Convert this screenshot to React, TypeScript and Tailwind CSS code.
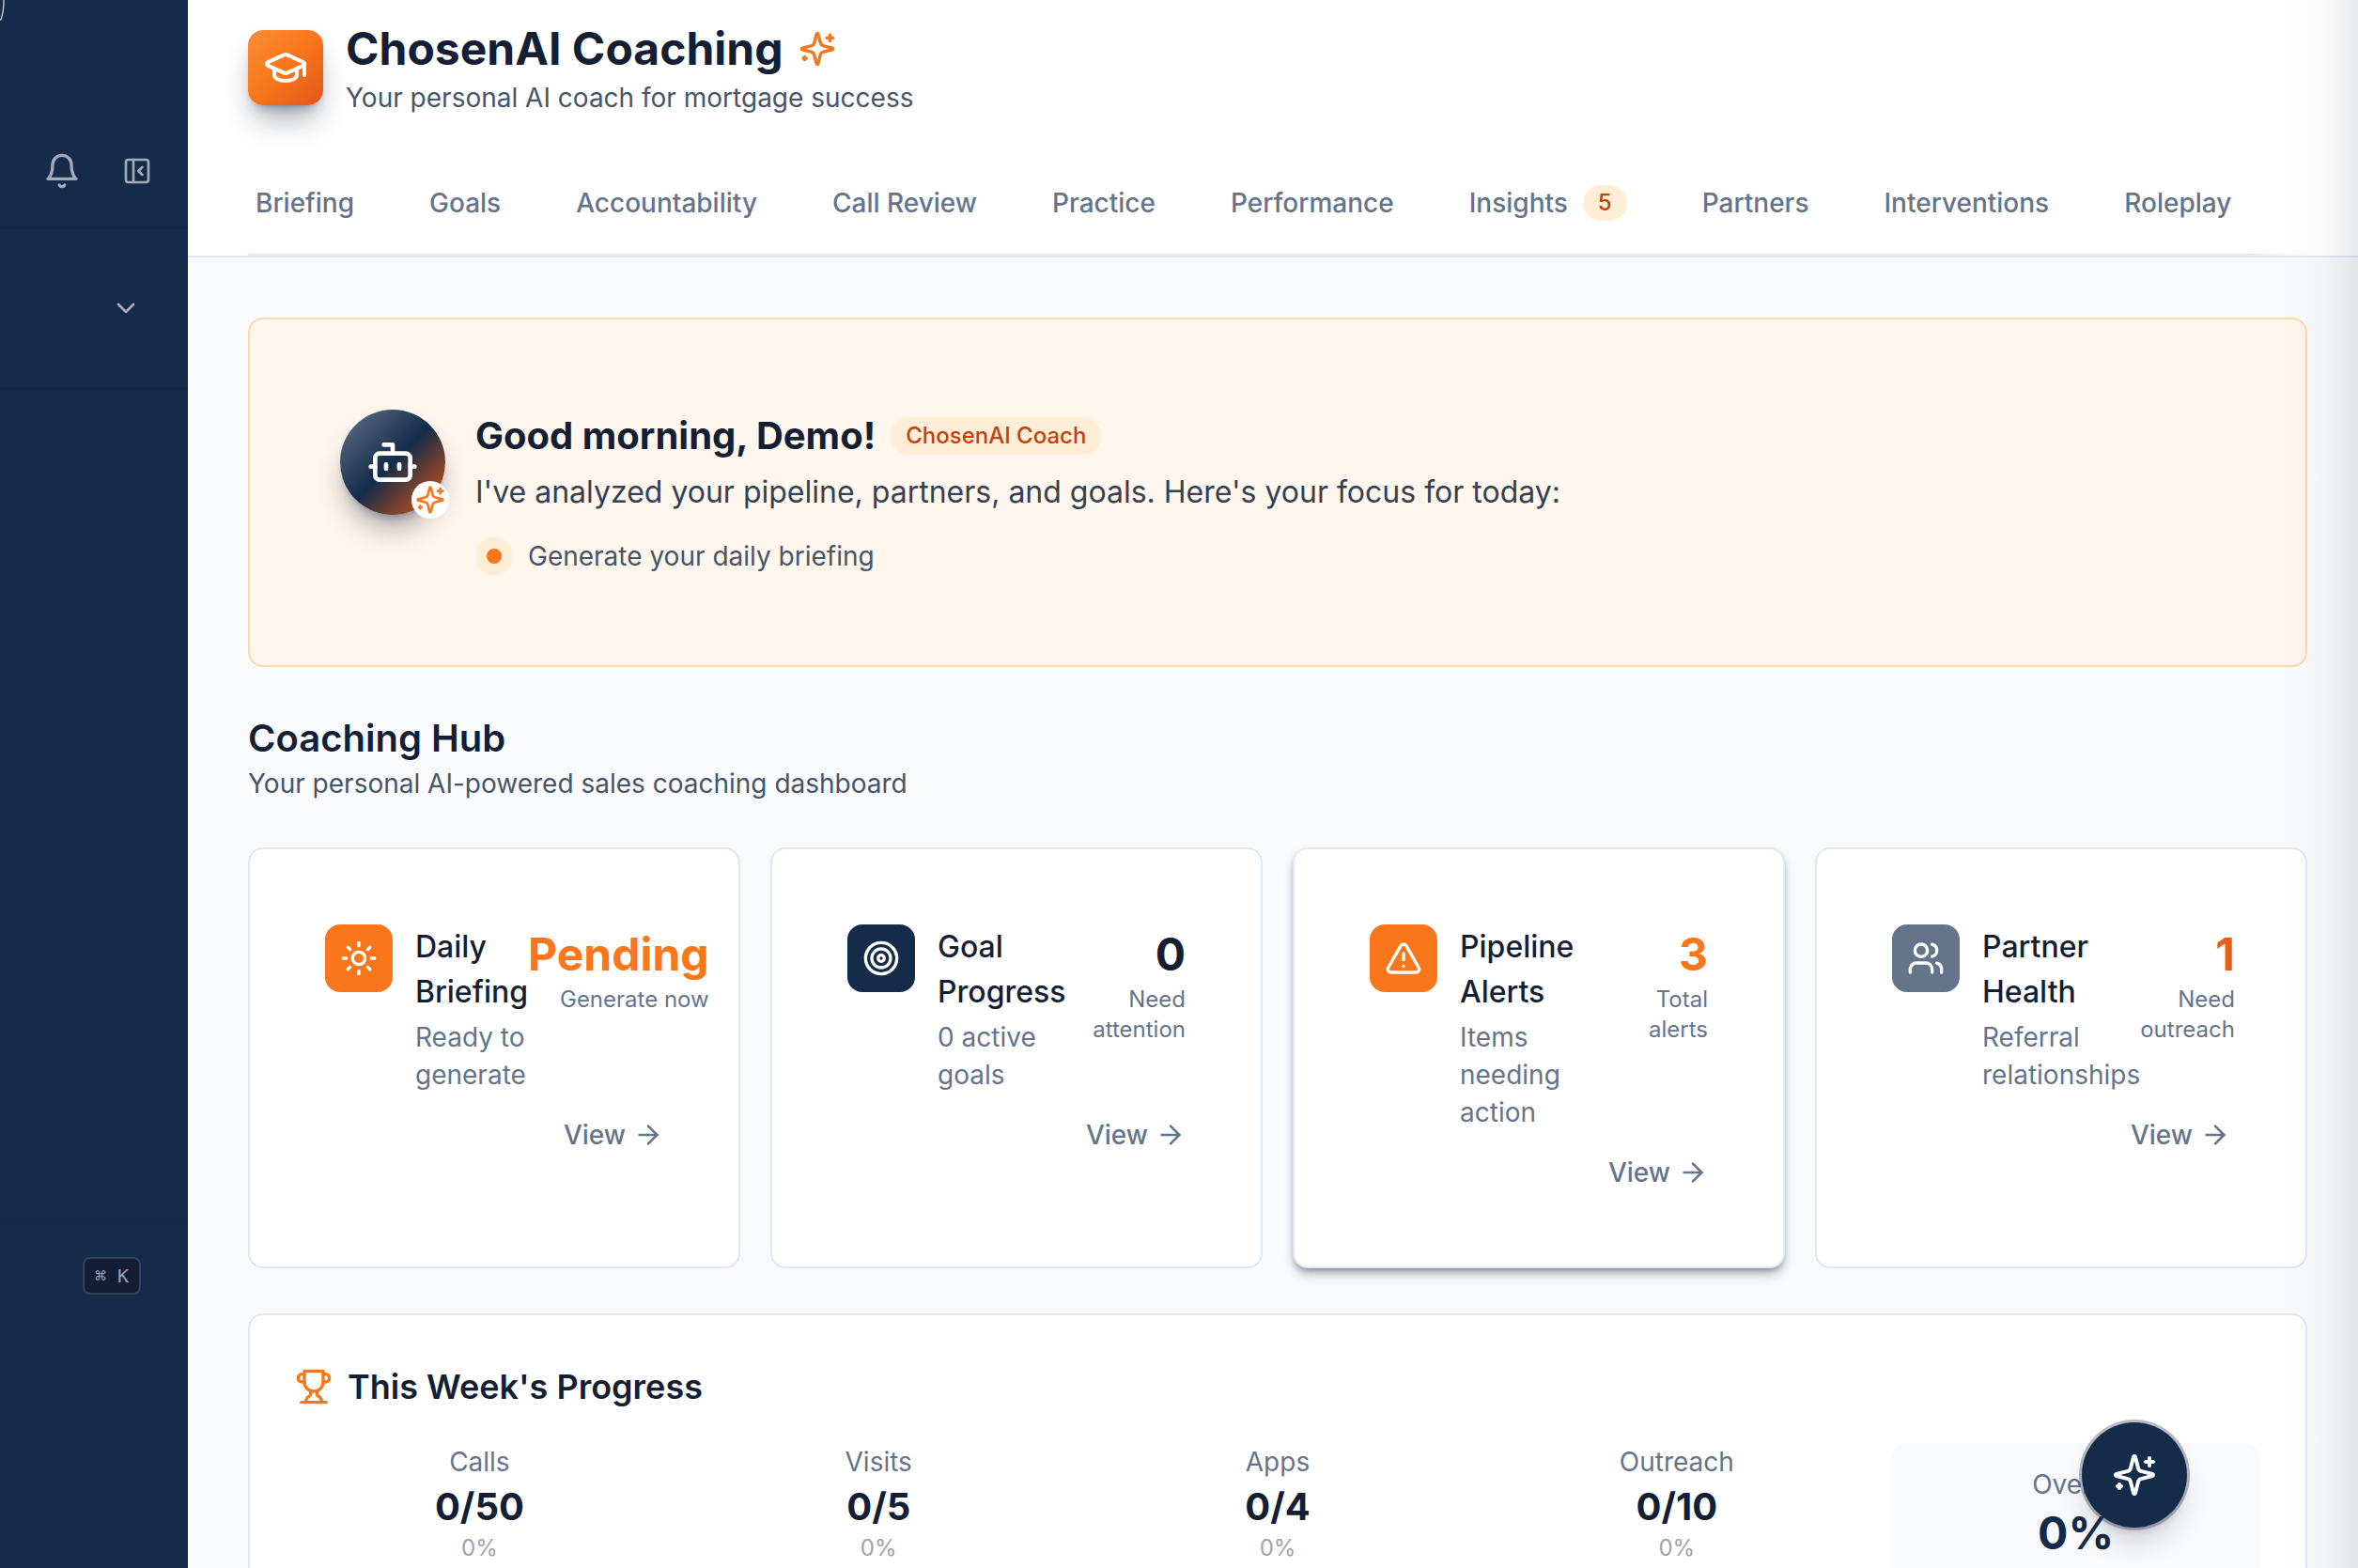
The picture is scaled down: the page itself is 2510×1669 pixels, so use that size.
import type { ReactNode } from 'react';
import {
  ArrowRight,
  Bot,
  ChevronDown,
  GraduationCap,
  PanelLeftClose,
  Sun,
  Target,
  TriangleAlert,
  Users,
} from 'lucide-react';

const TABS = [
  { label: 'Briefing' },
  { label: 'Goals' },
  { label: 'Accountability' },
  { label: 'Call Review' },
  { label: 'Practice' },
  { label: 'Performance' },
  { label: 'Insights', count: 5 },
  { label: 'Partners' },
  { label: 'Interventions' },
  { label: 'Roleplay' },
];

const HUB_CARDS = [
  {
    title: 'Daily Briefing',
    text: 'Ready to generate',
    value: 'Pending',
    note: 'Generate now',
    icon: <Sun size={40} />,
    tile: 'bg-[#f9761a]',
    tone: 'text-[#f9761a]',
  },
  {
    title: 'Goal Progress',
    text: '0 active goals',
    value: '0',
    note: 'Need attention',
    icon: <Target size={40} />,
    tile: 'bg-[#142c49]',
    tone: 'text-[#141f35]',
  },
  {
    title: 'Pipeline Alerts',
    text: 'Items needing action',
    value: '3',
    note: 'Total alerts',
    icon: <TriangleAlert size={40} />,
    tile: 'bg-[#f9761a]',
    tone: 'text-[#f9761a]',
    raised: true,
  },
  {
    title: 'Partner Health',
    text: 'Referral relationships',
    value: '1',
    note: 'Need outreach',
    icon: <Users size={40} />,
    tile: 'bg-[#64748b]',
    tone: 'text-[#e85d1f]',
  },
];

const STATS = [
  { label: 'Calls', value: '0/50', pct: '0%' },
  { label: 'Visits', value: '0/5', pct: '0%' },
  { label: 'Apps', value: '0/4', pct: '0%' },
  { label: 'Outreach', value: '0/10', pct: '0%' },
];

type GlyphProps = { size: number; className?: string; weight?: number; children: ReactNode };

function Glyph({ size, className, weight = 2, children }: GlyphProps) {
  return (
    <svg
      width={size}
      height={size}
      viewBox="0 0 24 24"
      fill="none"
      stroke="currentColor"
      strokeWidth={weight}
      strokeLinecap="round"
      strokeLinejoin="round"
      className={className}
      aria-hidden="true"
    >
      {children}
    </svg>
  );
}

function SparklesIcon({ size, className }: { size: number; className?: string }) {
  return (
    <Glyph size={size} className={className}>
      <path d="M9.937 15.5A2 2 0 0 0 8.5 14.063l-6.135-1.582a.5.5 0 0 1 0-.962L8.5 9.936A2 2 0 0 0 9.937 8.5l1.582-6.135a.5.5 0 0 1 .963 0L14.063 8.5A2 2 0 0 0 15.5 9.937l6.135 1.581a.5.5 0 0 1 0 .964L15.5 14.063a2 2 0 0 0-1.437 1.437l-1.582 6.135a.5.5 0 0 1-.963 0z" />
      <path d="M20 3v4" />
      <path d="M22 5h-4" />
      <path d="M4 17v2" />
      <path d="M5 18H3" />
    </Glyph>
  );
}

function BellIcon({ size }: { size: number }) {
  return (
    <Glyph size={size}>
      <path d="M6 8a6 6 0 0 1 12 0c0 7 3 9 3 9H3s3-2 3-9" />
      <path d="M10.3 21a1.94 1.94 0 0 0 3.4 0" />
    </Glyph>
  );
}

function TrophyIcon({ size, className }: { size: number; className?: string }) {
  return (
    <Glyph size={size} className={className}>
      <path d="M6 9H4.5a2.5 2.5 0 0 1 0-5H6" />
      <path d="M18 9h1.5a2.5 2.5 0 0 0 0-5H18" />
      <path d="M4 22h16" />
      <path d="M10 14.66V17c0 .55-.47.98-.97 1.21C7.85 18.75 7 20.24 7 22" />
      <path d="M14 14.66V17c0 .55.47.98.97 1.21C16.15 18.75 17 20.24 17 22" />
      <path d="M18 2H6v7a6 6 0 0 0 12 0V2Z" />
    </Glyph>
  );
}

function Sidebar() {
  return (
    <aside className="relative flex w-[200px] shrink-0 flex-col overflow-hidden bg-[#142c49] text-[#a3abb8]">
      {/* Edge of the logo mark */}
      <svg className="absolute left-0 top-0" width="8" height="24" viewBox="0 0 8 24" fill="none">
        <path d="M4 0C4 8 3 15 1 21H0" stroke="#b9c0ca" strokeWidth="1.5" />
      </svg>
      <div className="flex h-[244px] items-end justify-end gap-11 border-b-2 border-[#12284a] pb-10 pr-[38px]">
        <button aria-label="Notifications" className="grid h-10 w-10 place-items-center">
          <BellIcon size={40} />
        </button>
        <button aria-label="Collapse sidebar" className="grid h-10 w-8 place-items-center">
          <PanelLeftClose size={32} />
        </button>
      </div>
      <div className="flex h-[170px] items-center justify-end border-b-2 border-[#12284a] pr-[50px]">
        <button aria-label="Switch workspace">
          <ChevronDown size={32} />
        </button>
      </div>
      <nav className="flex-1" />
      <div className="flex h-[373px] items-start justify-end border-t-2 border-[#12284a] pr-[50px] pt-10">
        <kbd className="flex h-10 items-center rounded-lg border-2 border-[#334155] bg-[#141d33] px-[11px] font-['DejaVu_Sans_Mono',monospace] text-[20px] leading-8 text-[#94a3b8]">
          ⌘ K
        </kbd>
      </div>
    </aside>
  );
}

function Header() {
  return (
    <header className="border-b-2 border-[#e2e8f0] bg-white pl-16 pr-[54px] pt-5">
      <div className="flex items-center gap-6">
        <div className="grid h-20 w-20 shrink-0 place-items-center rounded-2xl bg-linear-to-br/srgb from-[#fb8c38] via-[#f9761a] to-[#e2551c] text-white shadow-[0_20px_30px_-6px_rgba(15,23,42,0.35),0_8px_12px_-8px_rgba(20,44,73,0.5)]">
          <GraduationCap size={48} />
        </div>
        <div>
          <h1 className="flex items-center gap-4 text-[48px] font-bold leading-[64px] text-[#141f35]">
            ChosenAI Coaching
            <SparklesIcon size={40} className="text-[#f9761a]" />
          </h1>
          <p className="text-[28px] leading-10 text-[#475569]">Your personal AI coach for mortgage success</p>
        </div>
      </div>
      <nav className="mt-[60px] flex h-[86px] items-start gap-20 whitespace-nowrap pl-2 pt-3">
        {TABS.map((t) => (
          <button key={t.label} className="flex h-10 items-center gap-4 text-[28px] font-medium leading-10 text-[#64748b]">
            {t.label}
            {t.count && (
              <span className="rounded-full bg-[#ffedd5] px-4 text-[24px] leading-[38px] text-[#c2410c]">{t.count}</span>
            )}
          </button>
        ))}
      </nav>
      <div className="h-0.5 bg-gradient-to-r from-[#e2e8f0] from-97% to-white" />
    </header>
  );
}

function Greeting() {
  return (
    <section className="flex gap-8 rounded-2xl border-2 border-[#fed7aa] bg-[#fff6ed] p-24">
      <div className="relative h-28 w-28 shrink-0">
        <div className="grid h-28 w-28 place-items-center rounded-full bg-linear-to-br/srgb from-[#64748b] via-[#142c49] to-[#ea580c] text-white shadow-[0_20px_30px_-6px_rgba(15,23,42,0.35),0_8px_12px_-8px_rgba(20,44,73,0.5)]">
          <Bot size={56} />
        </div>
        <div className="absolute -bottom-1 -right-1 grid h-10 w-10 place-items-center rounded-full bg-white text-[#f9761a]">
          <SparklesIcon size={32} />
        </div>
      </div>
      <div>
        <div className="flex items-center gap-4">
          <h2 className="text-[40px] font-bold leading-[56px] text-[#141f35]">Good morning, Demo!</h2>
          <span className="rounded-full bg-[#ffedd5] px-4 text-[24px] font-medium leading-10 text-[#c2410c]">
            ChosenAI Coach
          </span>
        </div>
        <p className="mt-2 text-[32px] leading-[48px] text-[#334155]">
          I've analyzed your pipeline, partners, and goals. Here's your focus for today:
        </p>
        <div className="mt-6 flex items-center gap-4">
          <span className="grid h-10 w-10 place-items-center rounded-full bg-[#ffedd5]">
            <span className="h-4 w-4 rounded-full bg-[#f9761a]" />
          </span>
          <span className="text-[28px] leading-10 text-[#475569]">Generate your daily briefing</span>
        </div>
      </div>
    </section>
  );
}

type HubCardProps = {
  title: string;
  text: string;
  value: string;
  note: string;
  icon: ReactNode;
  tile: string;
  tone: string;
  raised?: boolean;
};

function HubCard({ title, text, value, note, icon, tile, tone, raised }: HubCardProps) {
  return (
    <article
      className={`rounded-2xl border-2 border-[#e2e8f0] bg-white p-20 ${
        raised ? 'shadow-[0_8px_12px_-2px_rgba(15,23,42,0.25),0_4px_8px_-4px_rgba(20,44,73,0.6)]' : ''
      }`}
    >
      <div className="flex items-start justify-between">
        <div className="flex items-start gap-6">
          <div className={`grid h-[72px] w-[72px] shrink-0 place-items-center rounded-2xl text-white ${tile}`}>{icon}</div>
          <div>
            <h3 className="text-[32px] font-medium leading-[48px] text-[#141f35]">{title}</h3>
            <p className="mt-1 text-[28px] leading-10 text-[#64748b]">{text}</p>
          </div>
        </div>
        <div className="text-right">
          <div className={`text-[48px] font-bold leading-[64px] ${tone}`}>{value}</div>
          <div className="text-[24px] leading-8 text-[#64748b]">{note}</div>
        </div>
      </div>
      <div className="mt-6 flex justify-end">
        <button className="flex items-center gap-2 text-[28px] font-medium leading-10 text-[#64748b]">
          View <ArrowRight size={32} />
        </button>
      </div>
    </article>
  );
}

function WeekProgress() {
  return (
    <section className="mt-12 rounded-2xl border-2 border-[#e2e8f0] bg-white p-12">
      <h2 className="flex items-center gap-4 text-[36px] font-semibold leading-[56px] text-[#141f35]">
        <TrophyIcon size={40} className="text-[#f9761a]" />
        This Week's Progress
      </h2>
      <div className="mt-8 grid grid-cols-5 gap-8 text-center">
        {STATS.map((s) => (
          <div key={s.label}>
            <div className="text-[28px] leading-10 text-[#64748b]">{s.label}</div>
            <div className="text-[40px] font-bold leading-[56px] text-[#141f35]">{s.value}</div>
            <div className="text-[24px] leading-8 text-[#9ca3af]">{s.pct}</div>
          </div>
        ))}
        <div className="rounded-2xl bg-[#f8fafc] p-6">
          <div className="text-[28px] leading-10 text-[#64748b]">Overall</div>
          <div className="text-[48px] font-bold leading-[64px] text-[#142c49]">0%</div>
        </div>
      </div>
    </section>
  );
}

export default function App() {
  return (
    <div className="flex h-screen overflow-hidden bg-[#f9fafc] font-['Inter',sans-serif]">
      <Sidebar />
      <main className="min-w-0 flex-1 overflow-hidden">
        <Header />
        <div className="pb-16 pl-16 pr-[54px] pt-16">
          <Greeting />
          <h2 className="mt-12 text-[40px] font-semibold leading-[56px] text-[#141f35]">Coaching Hub</h2>
          <p className="text-[28px] leading-10 text-[#475569]">Your personal AI-powered sales coaching dashboard</p>
          <div className="mt-12 grid grid-cols-4 gap-8">
            {HUB_CARDS.map((c) => (
              <HubCard key={c.title} {...c} />
            ))}
          </div>
          <WeekProgress />
        </div>
      </main>

      {/* Shade cast by the off-canvas drawer */}
      <div className="pointer-events-none fixed inset-y-0 right-0 w-20 bg-linear-to-r/srgb from-slate-900/0 via-slate-900/2 to-slate-900/9" />

      <button
        aria-label="Open assistant"
        className="fixed bottom-[43px] right-[182px] grid h-28 w-28 place-items-center rounded-full bg-[#142c49] text-white shadow-[0_0_0_3px_rgba(20,31,53,0.3),0_20px_30px_-6px_rgba(15,23,42,0.18),0_8px_12px_-4px_rgba(20,44,73,0.12)]"
      >
        <SparklesIcon size={48} />
      </button>
    </div>
  );
}
